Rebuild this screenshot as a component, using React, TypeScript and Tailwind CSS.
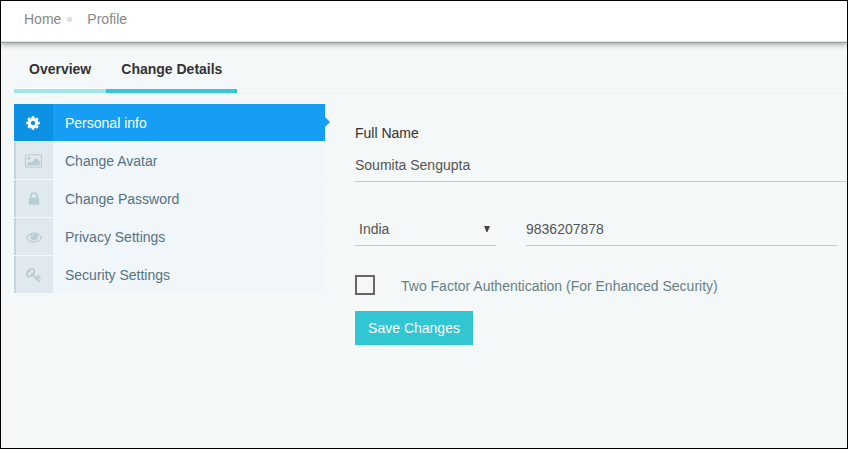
type MenuItem = { label: string; viewBox: string; path: string; width: number };

const items: MenuItem[] = [
  {
    label: "Personal info",
    viewBox: "0 0 1792 1792",
    width: 16,
    path: "M1152 896q0-106-75-181t-181-75-181 75-75 181 75 181 181 75 181-75 75-181zm512-109v222q0 12-8 23t-20 13l-185 28q-19 54-39 91 35 50 107 138 10 12 10 25t-9 23q-27 37-99 108t-94 71q-12 0-26-9l-138-108q-44 23-91 38-16 136-29 186-7 28-36 28h-222q-14 0-24.5-8.5t-11.5-21.5l-28-184q-49-16-90-37l-141 107q-10 9-25 9-14 0-25-11-126-114-165-168-7-10-7-23 0-12 8-23 15-21 51-66.5t54-70.5q-27-50-41-99l-183-27q-13-2-21-12.5t-8-23.5v-222q0-12 8-23t19-13l186-28q14-46 39-92-40-57-107-138-10-12-10-24 0-10 9-23 26-36 98.5-107.5t94.5-71.5q13 0 26 10l138 107q44-23 91-38 16-136 29-186 7-28 36-28h222q14 0 24.5 8.5t11.5 21.5l28 184q49 16 90 37l142-107q9-9 24-9 13 0 25 10 129 119 165 170 7 8 7 22 0 12-8 23-15 21-51 66.5t-54 70.5q26 50 41 98l183 28q13 2 21 12.5t8 23.5z",
  },
  {
    label: "Change Avatar",
    viewBox: "-64 0 1920 1792",
    width: 17,
    path: "M576 576q0 80-56 136t-136 56-136-56-56-136 56-136 136-56 136 56 56 136zm1024 384v448h-1408v-192l320-320 160 160 512-512zm96-704h-1600q-13 0-22.5 9.5t-9.5 22.5v1216q0 13 9.5 22.5t22.5 9.5h1600q13 0 22.5-9.5t9.5-22.5v-1216q0-13-9.5-22.5t-22.5-9.5zm160 32v1216q0 66-47 113t-113 47h-1600q-66 0-113-47t-47-113v-1216q0-66 47-113t113-47h1600q66 0 113 47t47 113z",
  },
  {
    label: "Change Password",
    viewBox: "0 0 1792 1792",
    width: 16,
    path: "M640 768h512v-192q0-106-75-181t-181-75-181 75-75 181v192zm832 96v576q0 40-28 68t-68 28h-960q-40 0-68-28t-28-68v-576q0-40 28-68t68-28h32v-192q0-184 132-316t316-132 316 132 132 316v192h32q40 0 68 28t28 68z",
  },
  {
    label: "Privacy Settings",
    viewBox: "0 0 1792 1792",
    width: 16,
    path: "M1664 960q-152-236-381-353 61 104 61 225 0 185-131.5 316.5t-316.5 131.5-316.5-131.5-131.5-316.5q0-121 61-225-229 117-381 353 133 205 333.5 326.5t434.5 121.5 434.5-121.5 333.5-326.5zm-720-384q0-20-14-34t-34-14q-125 0-214.5 89.5t-89.5 214.5q0 20 14 34t34 14 34-14 14-34q0-86 61-147t147-61q20 0 34-14t14-34zm848 384q0 34-20 69-140 230-376.5 368.5t-499.5 138.5-499.5-139-376.5-368q-20-35-20-69t20-69q140-229 376.5-368t499.5-139 499.5 139 376.5 368q20 35 20 69z",
  },
  {
    label: "Security Settings",
    viewBox: "0 0 1792 1792",
    width: 16,
    path: "M832 512q0-80-56-136t-136-56-136 56-56 136q0 42 19 83-41-19-83-19-80 0-136 56t-56 136 56 136 136 56 136-56 56-136q0-42-19-83 41 19 83 19 80 0 136-56t56-136zm851 704q0 17-49 66t-66 49q-9 0-28.5-16t-36.5-33-38.5-40-24.5-26l-96 96 220 220q28 28 28 68 0 42-39 81t-81 39q-40 0-68-28l-671-671q-176 131-365 131-163 0-265.5-102.5t-102.5-265.5q0-160 95-313t248-248 313-95q163 0 265.5 102.5t102.5 265.5q0 189-131 365l355 355 96-96q-3-3-26-24.5t-40-38.5-33-36.5-16-28.5q0-17 49-66t66-49q13 0 23 10 6 6 46 44.5t82 79.5 86.5 86 73 78 28.5 41z",
  },
];

function MenuRow({ item, active }: { item: MenuItem; active: boolean }) {
  return (
    <li
      className={
        active
          ? "relative flex h-[37px] items-center bg-[#169ef4] text-white"
          : "relative flex h-[37px] items-center bg-[#f0f6fa] text-[#557386]"
      }
    >
      <span
        className={
          active
            ? "flex h-full w-[39px] items-center justify-center bg-[#0c91e5] pr-px"
            : "flex h-full w-[39px] items-center justify-center border-l-2 border-[#c4d5df] bg-[#e0e9f0] pr-0.5 text-[#b9cbd5]"
        }
      >
        <svg viewBox={item.viewBox} width={item.width} height={16} fill="currentColor">
          <path d={item.path} />
        </svg>
      </span>
      <span className="pl-3">{item.label}</span>
      {active && (
        <svg className="absolute top-[13px] left-full" width="5" height="10" viewBox="0 0 5 10">
          <path d="M0 0L5 5L0 10Z" fill="#169ef4" />
        </svg>
      )}
    </li>
  );
}

export default function App() {
  return (
    <div className="flex h-[449px] w-[848px] flex-col overflow-hidden border border-black bg-[#f4f8f9] font-['Liberation_Sans',Arial,sans-serif] text-sm leading-5">
      <header className="flex h-[41px] shrink-0 items-center border-b border-[#e2e2e2] bg-white pb-1 pl-[23px] text-[#888] shadow-[0_1px_0_#9c9c9c,0_2px_6px_rgba(0,0,0,0.4)]">
        <span>Home</span>
        <span className="mr-[15px] ml-1.5 size-[5px] rounded-full bg-[#dadada]" />
        <span>Profile</span>
      </header>

      <div className="pt-2.5 pl-[13px]">
        <nav className="flex h-[42px] border-b border-[#edf1f4] font-bold text-[#333]">
          <a className="-mb-px h-[41px] border-b-4 border-[#a0e5ea] px-[15px] pt-[7px]">Overview</a>
          <a className="-mb-px h-[41px] border-b-4 border-[#36c6d3] px-[15px] pt-[7px]">Change Details</a>
        </nav>

        <div className="flex pt-2.5">
          <ul className="flex w-[311px] shrink-0 flex-col gap-px">
            {items.map((item, i) => (
              <MenuRow key={item.label} item={item} active={i === 0} />
            ))}
          </ul>

          <form className="ml-[30px] flex-1 pt-[19px]">
            <label className="block text-[#333]">Full Name</label>
            <div className="mt-3 h-[27px] border-b border-[#c2cad8] text-[#555]">Soumita Sengupta</div>

            <div className="mt-[37px] flex gap-[30px] text-[#555]">
              <div className="flex h-[27px] w-[141px] justify-between border-b border-[#c2cad8] pl-1">
                <span>India</span>
                <svg className="mt-[7px] mr-1.5" width="6" height="6" viewBox="0 0 6 6">
                  <path d="M0 0H6L3.5 6H2.5Z" fill="#444" />
                </svg>
              </div>
              <div className="h-[27px] w-[311px] border-b border-[#c2cad8]">9836207878</div>
            </div>

            <div className="mt-[29px] flex">
              <span className="size-5 border-2 border-[#666]" />
              <span className="mt-px ml-[26px] text-[#678087]">Two Factor Authentication (For Enhanced Security)</span>
            </div>

            <button type="button" className="mt-[15px] block h-[34px] w-[118px] bg-[#32c5d2] text-white">
              Save Changes
            </button>
          </form>
        </div>
      </div>
    </div>
  );
}
